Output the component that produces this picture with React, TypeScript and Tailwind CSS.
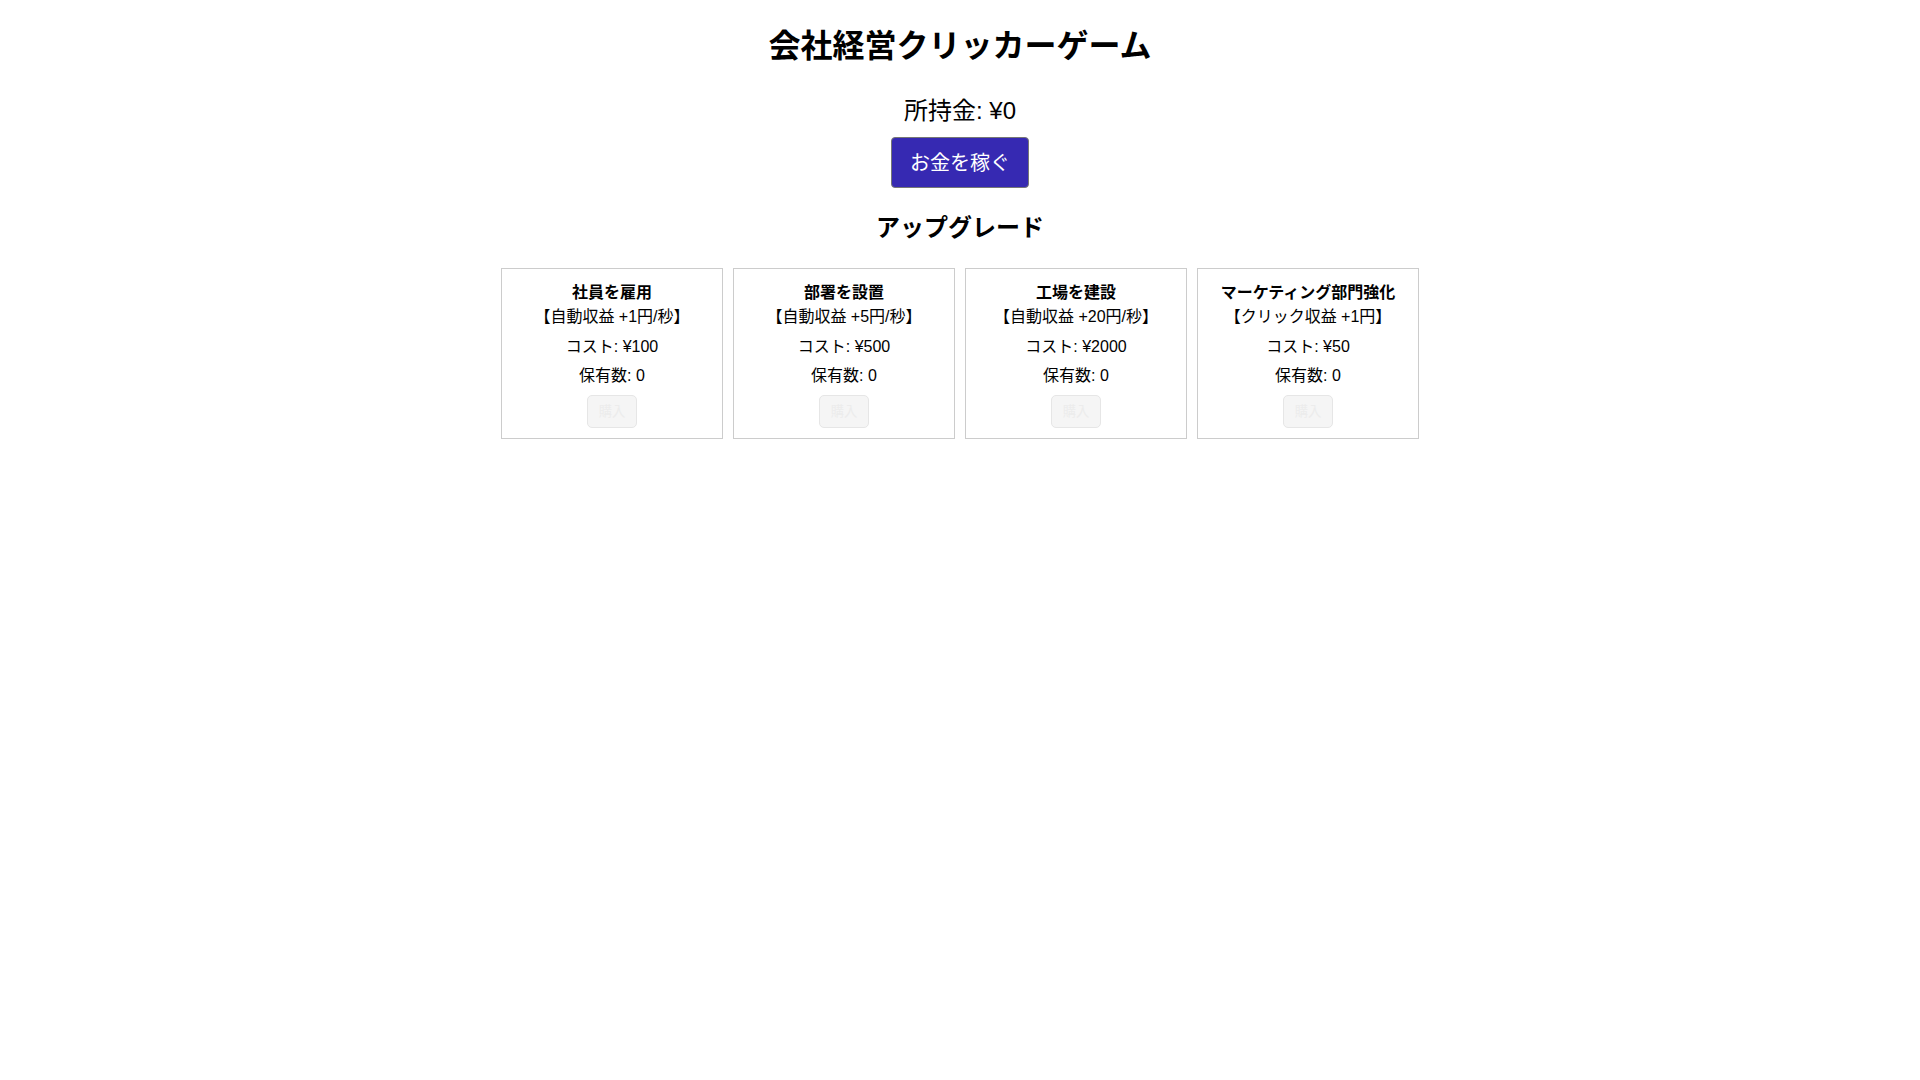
import { useEffect, useState } from "react";

type Upgrade = {
  id: string;
  name: string;
  desc: string;
  cost: number;
  kind: "auto" | "click";
  amount: number;
};

const UPGRADES: Upgrade[] = [
  { id: "staff", name: "社員を雇用", desc: "【自動収益 +1円/秒】", cost: 100, kind: "auto", amount: 1 },
  { id: "dept", name: "部署を設置", desc: "【自動収益 +5円/秒】", cost: 500, kind: "auto", amount: 5 },
  { id: "factory", name: "工場を建設", desc: "【自動収益 +20円/秒】", cost: 2000, kind: "auto", amount: 20 },
  { id: "marketing", name: "マーケティング部門強化", desc: "【クリック収益 +1円】", cost: 50, kind: "click", amount: 1 },
];

export default function App() {
  const [money, setMoney] = useState(0);
  const [owned, setOwned] = useState<Record<string, number>>({});

  const perClick = 1 + UPGRADES.filter((u) => u.kind === "click").reduce((s, u) => s + (owned[u.id] || 0) * u.amount, 0);
  const perSec = UPGRADES.filter((u) => u.kind === "auto").reduce((s, u) => s + (owned[u.id] || 0) * u.amount, 0);

  useEffect(() => {
    if (!perSec) return;
    const t = setInterval(() => setMoney((m) => m + perSec), 1000);
    return () => clearInterval(t);
  }, [perSec]);

  const buy = (u: Upgrade) => {
    if (money < u.cost) return;
    setMoney((m) => m - u.cost);
    setOwned((o) => ({ ...o, [u.id]: (o[u.id] || 0) + 1 }));
  };

  return (
    <div className="min-h-screen bg-white text-center text-black font-['Liberation_Sans','Noto_Sans_CJK_JP',sans-serif]">
      <h1 className="pt-[23px] text-[32px] leading-[46px] font-bold">会社経営クリッカーゲーム</h1>

      <p className="mt-[24px] text-[24px] leading-[35px]">所持金: ¥{money}</p>

      <button
        onClick={() => setMoney((m) => m + perClick)}
        className="mt-[9px] h-[51px] w-[138px] rounded-[4px] border border-[#767676] bg-[#3629b2] text-[20px] text-white"
      >
        お金を稼ぐ
      </button>

      <h2 className="mt-[22px] text-[24px] leading-[35px] font-bold">アップグレード</h2>

      {/* Upgrades */}
      <div className="mt-[23px] flex justify-center gap-[10px]">
        {UPGRADES.map((u) => (
          <div key={u.id} className="flex w-[222px] flex-col items-center border border-[#cccccc] px-[10px] pt-[12px] pb-[10px] text-[16px]">
            <div className="leading-[24px] font-bold">{u.name}</div>
            <div className="leading-[24px]">{u.desc}</div>
            <div className="mt-[6px] leading-[23px]">コスト: ¥{u.cost}</div>
            <div className="mt-[6px] leading-[23px]">保有数: {owned[u.id] || 0}</div>
            <button
              onClick={() => buy(u)}
              disabled={money < u.cost}
              className="mt-[8px] h-[33px] w-[50px] rounded-[5px] border border-[#e6e6e6] bg-[#f5f5f5] text-[13.33px] text-[#ececec]"
            >
              購入
            </button>
          </div>
        ))}
      </div>
    </div>
  );
}
